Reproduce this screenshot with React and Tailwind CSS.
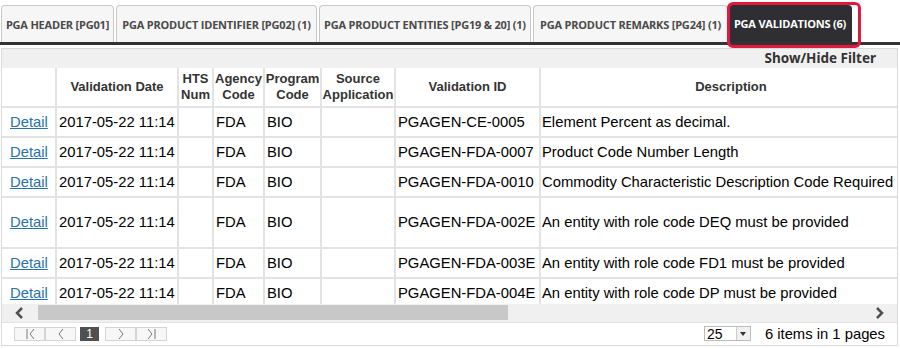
import React from 'react'

const tabs = [
  { label: 'PGA HEADER [PG01]', w: 'w-[113px]' },
  { label: 'PGA PRODUCT IDENTIFIER [PG02] (1)', w: 'w-[201px]' },
  { label: 'PGA PRODUCT ENTITIES [PG19 & 20] (1)', w: 'w-[212px]' },
  { label: 'PGA PRODUCT REMARKS [PG24] (1)', w: 'w-[195px]' },
]

const rows = [
  { id: 'PGAGEN-CE-0005', desc: 'Element Percent as decimal.', h: 'h-[30px]' },
  { id: 'PGAGEN-FDA-0007', desc: 'Product Code Number Length', h: 'h-[30px]' },
  { id: 'PGAGEN-FDA-0010', desc: 'Commodity Characteristic Description Code Required', h: 'h-[30px]' },
  { id: 'PGAGEN-FDA-002E', desc: 'An entity with role code DEQ must be provided', h: 'h-[51px]' },
  { id: 'PGAGEN-FDA-003E', desc: 'An entity with role code FD1 must be provided', h: 'h-[30px]' },
  { id: 'PGAGEN-FDA-004E', desc: 'An entity with role code DP must be provided', h: 'h-[30px]' },
]

function PagerBtn({ children }) {
  return (
    <div className="w-[31px] h-[14px] border border-[#d4d4d4] bg-[#f7f7f7] flex items-center justify-center">
      {children}
    </div>
  )
}

export default function App() {
  return (
    <div className="w-[900px] h-[349px] bg-white overflow-hidden relative">
      {/* tabs */}
      <div className="flex items-end gap-[2px] h-[45px] pl-[1px] border-b-[3px] border-[#333]">
        {tabs.map((t) => (
          <div
            key={t.label}
            className={`${t.w} h-[37px] flex items-center justify-center pt-[2px] rounded-t-[4px] border border-b-0 border-[#c8c8c8] bg-[#f6f6f6] text-[#4a4a4a] text-[11px] font-bold whitespace-nowrap font-['Open_Sans',sans-serif] tracking-[-0.2px]`}
          >
            {t.label}
          </div>
        ))}
        <div className="w-[124px] h-[37px] -ml-[2px] flex items-center justify-center pt-[2px] rounded-t-[4px] bg-[#2f2f33] text-white text-[11px] font-bold whitespace-nowrap font-['Open_Sans',sans-serif] tracking-[-0.2px]">
          PGA VALIDATIONS (6)
        </div>
      </div>
      {/* red highlight outline */}
      <div className="absolute left-[727px] top-[2px] w-[134px] h-[46px] border-[3px] border-[#e4173e] rounded-[6px]" />

      {/* grid panel */}
      <div className="ml-[1px] mt-[3px] w-[897px] h-[298px] border border-[#d9d9d9] flex flex-col overflow-hidden font-['Liberation_Sans',Arial,sans-serif]">
        <div className="h-[19px] bg-[#f0f0f0] flex items-center justify-end pr-[21px] text-[13.5px] font-bold text-[#333] font-['Noto_Sans',sans-serif]">
          Show/Hide Filter
        </div>
        <div className="overflow-hidden h-[240px]">
          <table className="table-fixed border-collapse w-[920px] text-[14.8px] text-black">
            <colgroup>
              <col className="w-[54px]" />
              <col className="w-[122px]" />
              <col className="w-[35px]" />
              <col className="w-[51px]" />
              <col className="w-[57px]" />
              <col className="w-[74px]" />
              <col className="w-[145px]" />
              <col className="w-[382px]" />
            </colgroup>
            <thead>
              <tr className="h-[39px] text-[13px] font-bold text-[#333] leading-[16px]">
                <th className="border-r-2 border-b-2 border-[#e3e3e3]"></th>
                <th className="border-x-2 border-b-2 border-[#e3e3e3]">Validation Date</th>
                <th className="border-x-2 border-b-2 border-[#e3e3e3]">HTS<br />Num</th>
                <th className="border-x-2 border-b-2 border-[#e3e3e3]">Agency<br />Code</th>
                <th className="border-x-2 border-b-2 border-[#e3e3e3]">Program<br />Code</th>
                <th className="border-x-2 border-b-2 border-[#e3e3e3]">Source<br />Application</th>
                <th className="border-x-2 border-b-2 border-[#e3e3e3]">Validation ID</th>
                <th className="border-x-2 border-b-2 border-[#e3e3e3]">Description</th>
              </tr>
            </thead>
            <tbody>
              {rows.map((r) => (
                <tr key={r.id} className={r.h}>
                  <td className="border-r-2 border-b-2 border-[#e3e3e3] pl-[8px]">
                    <span className="text-[#2a72aa] underline">Detail</span>
                  </td>
                  <td className="border-x-2 border-b-2 border-[#e3e3e3] pl-[2px] whitespace-nowrap">2017-05-22 11:14</td>
                  <td className="border-x-2 border-b-2 border-[#e3e3e3]"></td>
                  <td className="border-x-2 border-b-2 border-[#e3e3e3] pl-[2px]">FDA</td>
                  <td className="border-x-2 border-b-2 border-[#e3e3e3] pl-[2px]">BIO</td>
                  <td className="border-x-2 border-b-2 border-[#e3e3e3]"></td>
                  <td className="border-x-2 border-b-2 border-[#e3e3e3] pl-[2px] whitespace-nowrap">{r.id}</td>
                  <td className="border-x-2 border-b-2 border-[#e3e3e3] pl-[1px] whitespace-nowrap">{r.desc}</td>
                </tr>
              ))}
            </tbody>
          </table>
        </div>
        {/* horizontal scrollbar */}
        <div className="h-[18px] bg-[#f0f0f0] flex items-center">
          <div className="w-[36px] flex justify-center">
            <svg width="10" height="12" viewBox="0 0 10 12">
              <polyline points="7,1 2,6 7,11" fill="none" stroke="#505050" strokeWidth="2.5" />
            </svg>
          </div>
          <div className="w-[470px] h-[15px] bg-[#c8c8c8]" />
          <div className="flex-1" />
          <div className="w-[36px] flex justify-center">
            <svg width="10" height="12" viewBox="0 0 10 12">
              <polyline points="3,1 8,6 3,11" fill="none" stroke="#505050" strokeWidth="2.5" />
            </svg>
          </div>
        </div>
        {/* pager */}
        <div className="flex-1 flex items-center border-t border-[#e3e3e3] pl-[12px] pr-[12px]">
          <PagerBtn>
            <svg width="12" height="10" viewBox="0 0 12 10">
              <line x1="3" y1="0" x2="3" y2="10" stroke="#777" strokeWidth="1" />
              <polyline points="10,0 6,5 10,10" fill="none" stroke="#777" strokeWidth="1" />
            </svg>
          </PagerBtn>
          <PagerBtn>
            <svg width="8" height="10" viewBox="0 0 8 10">
              <polyline points="6,0 2,5 6,10" fill="none" stroke="#777" strokeWidth="1" />
            </svg>
          </PagerBtn>
          <div className="ml-[4px] w-[19px] h-[14px] bg-[#505050] text-white text-[12px] leading-[14px] flex items-center justify-center">1</div>
          <div className="ml-[6px] flex">
            <PagerBtn>
              <svg width="8" height="10" viewBox="0 0 8 10">
                <polyline points="2,0 6,5 2,10" fill="none" stroke="#777" strokeWidth="1" />
              </svg>
            </PagerBtn>
            <PagerBtn>
              <svg width="12" height="10" viewBox="0 0 12 10">
                <polyline points="2,0 6,5 2,10" fill="none" stroke="#777" strokeWidth="1" />
                <line x1="9" y1="0" x2="9" y2="10" stroke="#777" strokeWidth="1" />
              </svg>
            </PagerBtn>
          </div>
          <div className="flex-1" />
          <div className="flex items-center h-[15px] border border-[#bbb] w-[47px] bg-white">
            <span className="flex-1 pl-[2px] text-[14px] leading-[14px]">25</span>
            <div className="w-[14px] h-[13px] bg-[#f0f0f0] border-l border-[#ccc] flex items-center justify-center">
              <svg width="6" height="4" viewBox="0 0 6 4">
                <polygon points="0,0 6,0 3,4" fill="#333" />
              </svg>
            </div>
          </div>
          <span className="ml-[14px] text-[14.8px] text-black">6 items in 1 pages</span>
        </div>
      </div>
    </div>
  )
}
